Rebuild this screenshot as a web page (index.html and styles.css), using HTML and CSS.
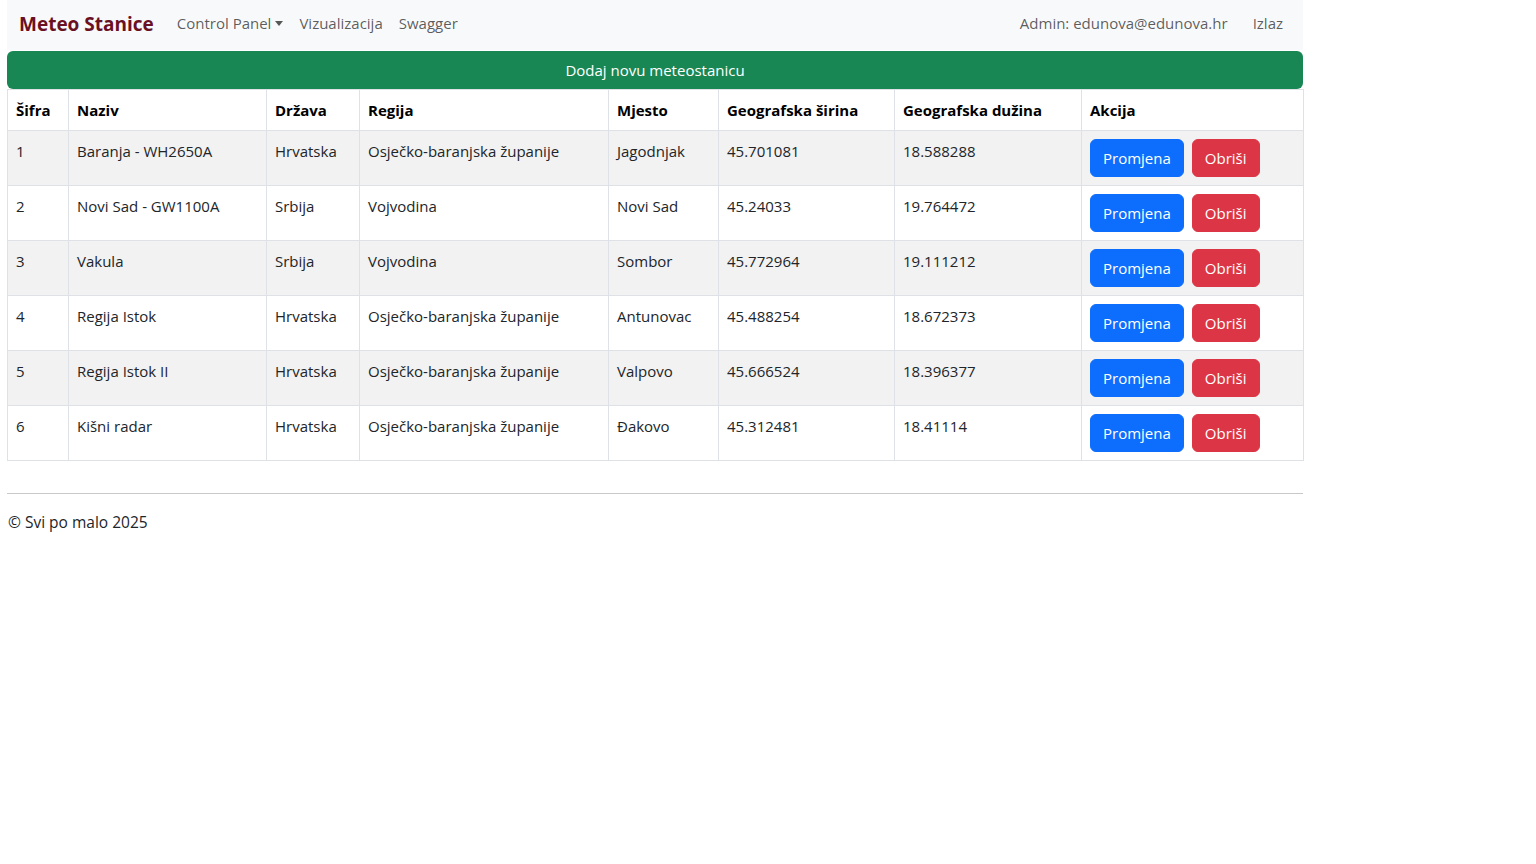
FILE: index.html
```html
<!DOCTYPE html>
<html lang="hr">
<head>
<meta charset="utf-8">
<title>Meteo Stanice</title>
<link rel="stylesheet" href="styles.css">
</head>
<body>
<div class="page">
  <nav class="navbar">
    <a class="brand" href="#">Meteo Stanice</a>
    <ul class="nav">
      <li><a class="nav-link dropdown-toggle" href="#">Control Panel</a></li>
      <li><a class="nav-link" href="#">Vizualizacija</a></li>
      <li><a class="nav-link" href="#">Swagger</a></li>
    </ul>
    <div class="nav-right">
      <span class="admin">Admin: edunova@edunova.hr</span>
      <a class="nav-link" href="#">Izlaz</a>
    </div>
  </nav>

  <a class="btn-add" href="#">Dodaj novu meteostanicu</a>

  <table class="table">
    <colgroup>
      <col class="c-sifra"><col class="c-naziv"><col class="c-drzava"><col class="c-regija">
      <col class="c-mjesto"><col class="c-sirina"><col class="c-duzina"><col class="c-akcija">
    </colgroup>
    <thead>
      <tr><th>Šifra</th><th>Naziv</th><th>Država</th><th>Regija</th><th>Mjesto</th><th>Geografska širina</th><th>Geografska dužina</th><th>Akcija</th></tr>
    </thead>
    <tbody>
      <tr><td>1</td><td>Baranja - WH2650A</td><td>Hrvatska</td><td>Osječko-baranjska županije</td><td>Jagodnjak</td><td>45.701081</td><td>18.588288</td><td><div class="actions"><button class="btn btn-primary">Promjena</button><button class="btn btn-danger">Obriši</button></div></td></tr>
      <tr><td>2</td><td>Novi Sad - GW1100A</td><td>Srbija</td><td>Vojvodina</td><td>Novi Sad</td><td>45.24033</td><td>19.764472</td><td><div class="actions"><button class="btn btn-primary">Promjena</button><button class="btn btn-danger">Obriši</button></div></td></tr>
      <tr><td>3</td><td>Vakula</td><td>Srbija</td><td>Vojvodina</td><td>Sombor</td><td>45.772964</td><td>19.111212</td><td><div class="actions"><button class="btn btn-primary">Promjena</button><button class="btn btn-danger">Obriši</button></div></td></tr>
      <tr><td>4</td><td>Regija Istok</td><td>Hrvatska</td><td>Osječko-baranjska županije</td><td>Antunovac</td><td>45.488254</td><td>18.672373</td><td><div class="actions"><button class="btn btn-primary">Promjena</button><button class="btn btn-danger">Obriši</button></div></td></tr>
      <tr><td>5</td><td>Regija Istok II</td><td>Hrvatska</td><td>Osječko-baranjska županije</td><td>Valpovo</td><td>45.666524</td><td>18.396377</td><td><div class="actions"><button class="btn btn-primary">Promjena</button><button class="btn btn-danger">Obriši</button></div></td></tr>
      <tr><td>6</td><td>Kišni radar</td><td>Hrvatska</td><td>Osječko-baranjska županije</td><td>Đakovo</td><td>45.312481</td><td>18.41114</td><td><div class="actions"><button class="btn btn-primary">Promjena</button><button class="btn btn-danger">Obriši</button></div></td></tr>
    </tbody>
  </table>

  <hr class="divider">
  <footer class="footer">© Svi po malo 2025</footer>
</div>
</body>
</html>
```

FILE: styles.css
```css
* { box-sizing: border-box; }
html, body { margin: 0; padding: 0; background: #fff; }
body {
  font-family: "Open Sans", "Noto Sans", "Liberation Sans", sans-serif;
  font-size: 15px;
  line-height: 24px;
  color: #212529;
}
.page {
  width: 1296px;
  margin-left: 7px;
}
.navbar {
  height: 50px;
  background: #f8f9fa;
  display: flex;
  align-items: center;
  padding: 0 12px 3px;
}
.brand {
  font-size: 19px;
  font-weight: 700;
  color: #6a1023;
  text-decoration: none;
  margin-right: 15px;
  line-height: 30px;
}
.nav {
  list-style: none;
  margin: 0;
  padding: 0;
  display: flex;
}
.nav-link {
  display: block;
  padding: 7px 8px 9px;
  color: rgba(0, 0, 0, 0.65);
  text-decoration: none;
}
.dropdown-toggle::after {
  content: "";
  display: inline-block;
  margin-left: 4px;
  vertical-align: 3px;
  border-top: 5px solid;
  border-right: 4.5px solid transparent;
  border-left: 4.5px solid transparent;
}
.nav-right {
  margin-left: auto;
  display: flex;
  align-items: center;
  gap: 17px;
}
.admin {
  color: rgba(0, 0, 0, 0.65);
  padding: 7px 0 9px;
}
.btn-add {
  display: block;
  margin-top: 1px;
  height: 38px;
  line-height: 38px;
  background: #198754;
  color: #fff;
  text-align: center;
  text-decoration: none;
  border-radius: 6px;
}
.table {
  width: 1296px;
  table-layout: fixed;
  border-collapse: collapse;
  margin-bottom: 32px;
}
.c-sifra { width: 61px; }
.c-naziv { width: 198px; }
.c-drzava { width: 93px; }
.c-regija { width: 249px; }
.c-mjesto { width: 110px; }
.c-sirina { width: 176px; }
.c-duzina { width: 187px; }
.c-akcija { width: 222px; }
.table th, .table td {
  border: 1px solid #dee2e6;
  padding: 8px;
  text-align: left;
  vertical-align: top;
  white-space: nowrap;
}
.table th { font-weight: 700; color: #000; }
.table td { color: #212529; }
.table tbody tr:nth-child(odd) td { background: #f2f2f2; }
.actions { display: flex; gap: 8px; }
.btn {
  font-family: inherit;
  font-size: 15px;
  line-height: 24px;
  padding: 6px 12px;
  border: 1px solid transparent;
  border-radius: 6px;
  color: #fff;
  cursor: pointer;
}
.btn-primary { background: #0d6efd; border-color: #0d6efd; }
.btn-danger { background: #dc3545; border-color: #dc3545; }
.divider {
  margin: 0 0 16px;
  border: 0;
  border-top: 1px solid #c8c8c8;
}
.footer {
  padding-left: 1px;
  font-size: 15.5px;
}
```
